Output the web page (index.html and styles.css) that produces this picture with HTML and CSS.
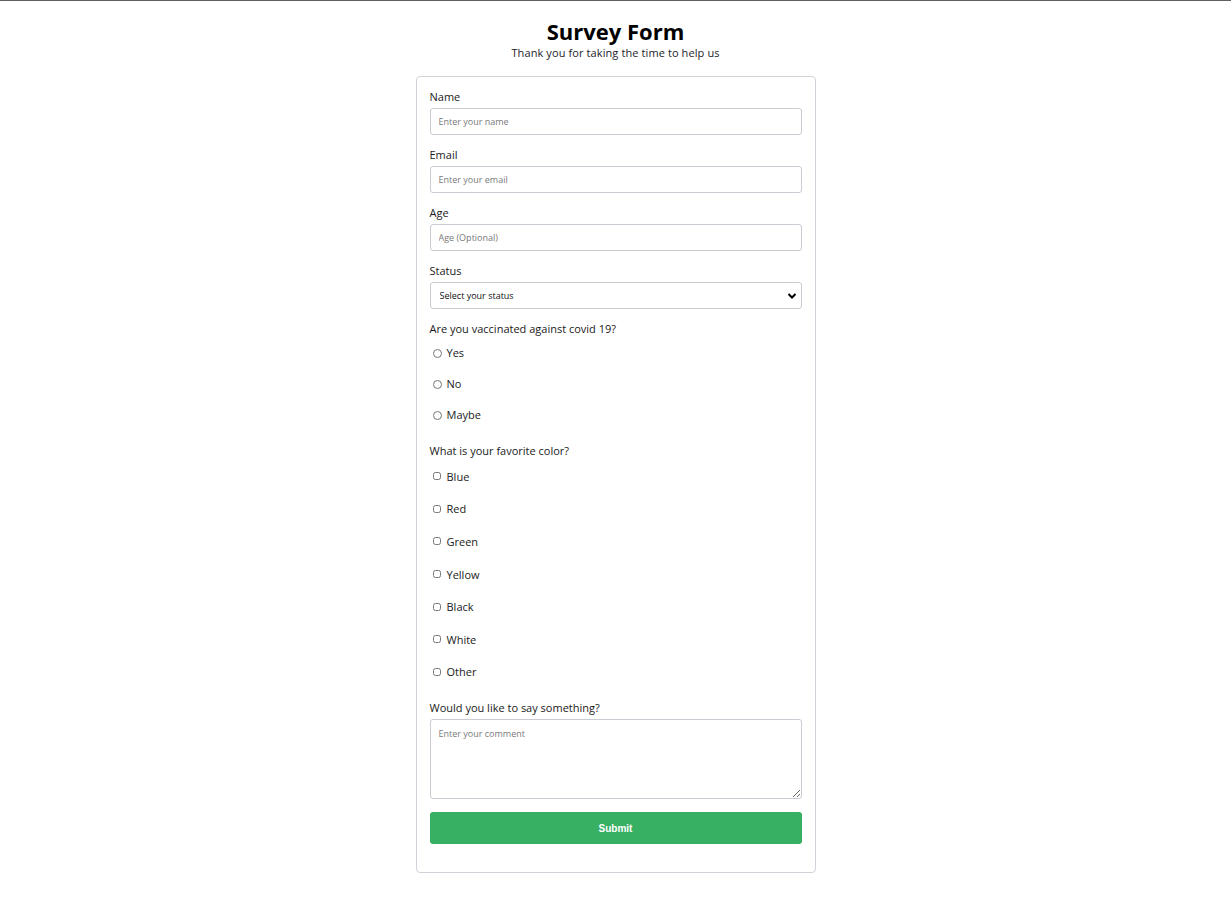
FILE: index.html
```html
<!DOCTYPE html>
<html lang="en">
<head>
<meta charset="utf-8">
<title>Survey Form</title>
<link rel="stylesheet" href="styles.css">
</head>
<body>
<div class="page">
  <header class="header">
    <h1 id="title" class="title">Survey Form</h1>
    <p id="description" class="subtitle">Thank you for taking the time to help us</p>
  </header>
  <form id="survey-form" class="form">
    <div class="group">
      <label class="label" for="name">Name</label>
      <input class="field" id="name" type="text" placeholder="Enter your name">
    </div>
    <div class="group">
      <label class="label" for="email">Email</label>
      <input class="field" id="email" type="email" placeholder="Enter your email">
    </div>
    <div class="group">
      <label class="label" for="number">Age</label>
      <input class="field" id="number" type="number" placeholder="Age (Optional)">
    </div>
    <div class="group">
      <label class="label" for="dropdown">Status</label>
      <div class="select-wrap">
        <select class="field select" id="dropdown">
          <option>Select your status</option>
          <option>Student</option>
          <option>Full time job</option>
          <option>Other</option>
        </select>
        <svg class="chev" viewBox="0 0 10 10" width="10" height="10"><path d="M1.5 3 L5 6.5 L8.5 3" fill="none" stroke="#000" stroke-width="2"/></svg>
      </div>
    </div>
    <div class="group">
      <p class="label tight">Are you vaccinated against covid 19?</p>
      <div class="radios">
        <label class="opt"><input class="radio" type="radio" name="vac" value="yes"><span>Yes</span></label>
        <label class="opt"><input class="radio" type="radio" name="vac" value="no"><span>No</span></label>
        <label class="opt"><input class="radio" type="radio" name="vac" value="maybe"><span>Maybe</span></label>
      </div>
    </div>
    <div class="group">
      <p class="label tight">What is your favorite color?</p>
      <div class="checks">
        <label class="opt chk"><input class="check" type="checkbox" value="blue"><span>Blue</span></label>
        <label class="opt chk"><input class="check" type="checkbox" value="red"><span>Red</span></label>
        <label class="opt chk"><input class="check" type="checkbox" value="green"><span>Green</span></label>
        <label class="opt chk"><input class="check" type="checkbox" value="yellow"><span>Yellow</span></label>
        <label class="opt chk"><input class="check" type="checkbox" value="black"><span>Black</span></label>
        <label class="opt chk"><input class="check" type="checkbox" value="white"><span>White</span></label>
        <label class="opt chk"><input class="check" type="checkbox" value="other"><span>Other</span></label>
      </div>
    </div>
    <div class="group">
      <label class="label" for="comment">Would you like to say something?</label>
      <textarea class="field area" id="comment" placeholder="Enter your comment"></textarea>
    </div>
    <button id="submit" class="submit" type="submit">Submit</button>
  </form>
</div>
</body>
</html>
```
FILE: styles.css
```css
* { box-sizing: border-box; }
html, body { margin: 0; padding: 0; background: #fff; }
body {
  font-family: "Open Sans", "Liberation Sans", sans-serif;
  color: #1a1a1a;
}
.page {
  border-top: 1px solid #5f5f5f;
  display: flex;
  flex-direction: column;
  align-items: center;
  padding-bottom: 40px;
}
.header {
  text-align: center;
  padding-top: 16px;
  height: 75px;
}
.title {
  margin: 0;
  font-size: 22px;
  line-height: 28px;
  font-weight: 700;
  color: #000;
}
.subtitle {
  margin: 0;
  font-size: 11px;
  line-height: 16px;
  letter-spacing: 0.1px;
  color: #1c1c2a;
}
.form {
  width: 400px;
  border: 1px solid #cfd2d8;
  border-radius: 4px;
  padding: 12px 13px 28px;
  display: flex;
  flex-direction: column;
}
.group {
  display: flex;
  flex-direction: column;
  margin-bottom: 12px;
}
.label {
  margin: 0 0 3px;
  font-size: 11px;
  line-height: 16px;
  color: #1a1a1a;
}
.label.tight { margin-bottom: 0; }
.field {
  width: 100%;
  height: 27px;
  border: 1px solid #c9ccd3;
  border-radius: 3px;
  padding: 0 8px;
  font-family: inherit;
  font-size: 9px;
  color: #222;
  background: #fff;
  outline: none;
}
.field::placeholder { color: #7a7a7a; }
.select-wrap { position: relative; }
.select {
  appearance: none;
  -webkit-appearance: none;
  padding-left: 9px;
  color: #111;
}
.chev {
  position: absolute;
  right: 5px;
  top: 9px;
  pointer-events: none;
}
.area {
  height: 80px;
  padding-top: 7px;
  resize: vertical;
}
.radios { display: flex; flex-direction: column; margin-top: 1px; }
.opt {
  display: flex;
  align-items: center;
  height: 31px;
  font-size: 11px;
  color: #1a1a1a;
}
.radios .opt span { position: relative; top: -1px; }
.checks { display: flex; flex-direction: column; margin-top: 1px; }
.chk { height: 32.6px; }
.radio {
  width: 9px;
  height: 9px;
  margin: 0 5px 0 3px;
  accent-color: #666;
}
.check {
  width: 8px;
  height: 8px;
  margin: 0 6px 0 3px;
}
.submit {
  margin-top: 1px;
  height: 32px;
  width: 100%;
  border: none;
  border-radius: 3px;
  background: #38b064;
  color: #fff;
  font-family: "Liberation Sans", Arial, sans-serif;
  font-weight: 700;
  font-size: 10px;
}
```
